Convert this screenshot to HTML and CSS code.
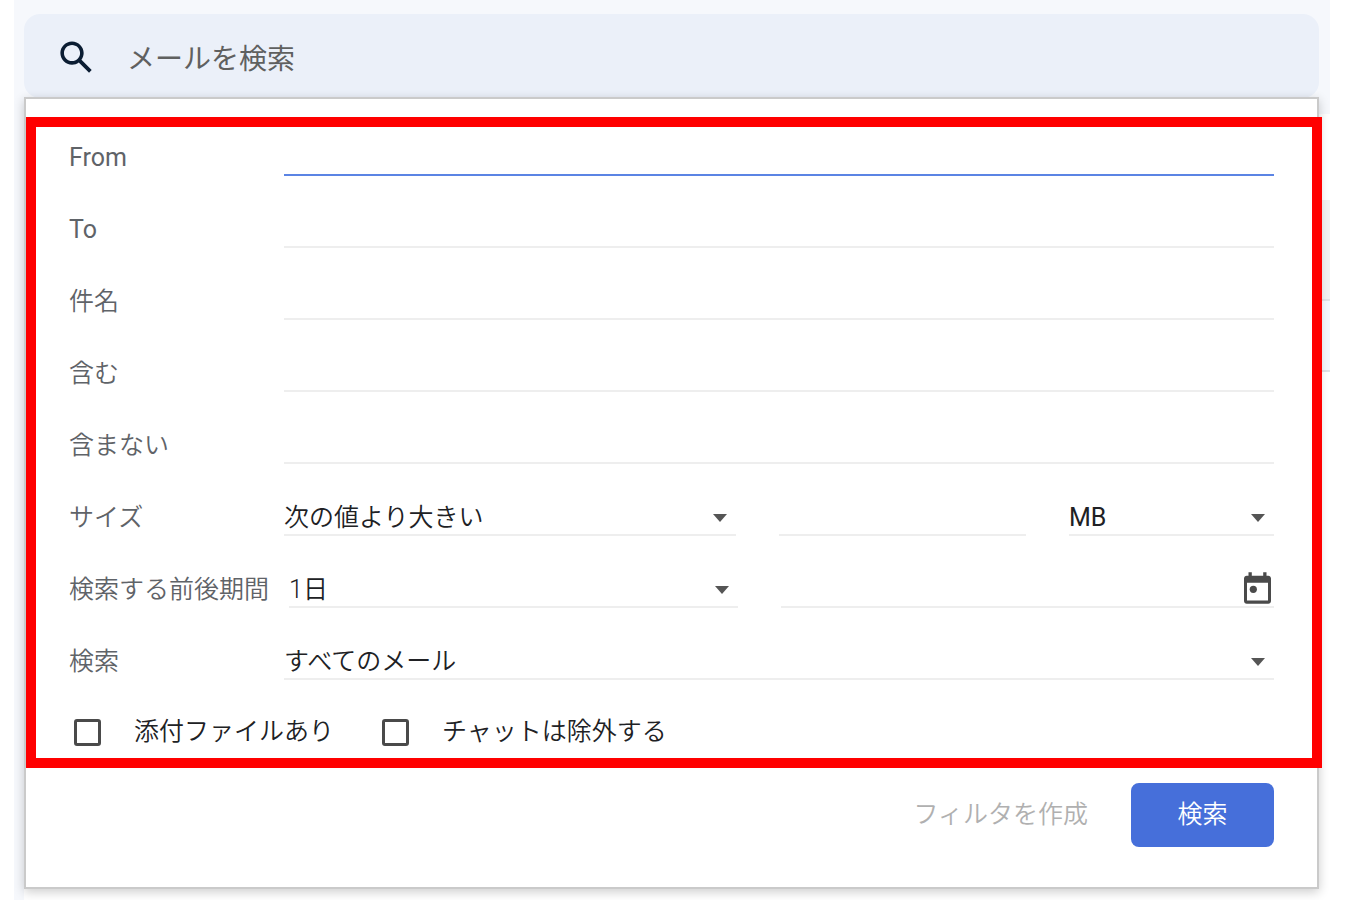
FILE: index.html
```
<!DOCTYPE html>
<html lang="ja">

<head>
    <meta charset="utf-8">
    <title>メールを検索</title>
    <link rel="stylesheet" href="styles.css">
</head>

<body>
    <div class="app">
        <header class="header">
            <form class="search-bar">
                <button type="button" class="icon-button" aria-label="検索">
                    <svg class="search-icon" viewBox="0 0 24 24">
                        <path d="M20.49 19l-5.73-5.73C15.53 12.2 16 10.91 16 9.5 16 5.91 13.09 3 9.5 3S3 5.91 3 9.5 5.91 16 9.5 16c1.41 0 2.7-.47 3.77-1.24L19 20.49 20.49 19zM5 9.5C5 7.01 7.01 5 9.5 5S14 7.01 14 9.5 11.99 14 9.5 14 5 11.99 5 9.5z" />
                    </svg>
                </button>
                <input class="search-input" type="text" placeholder="メールを検索" aria-label="メールを検索">
            </form>

            <!-- Search options drop-down -->
            <form class="panel">
                <div class="highlight"></div>
                <div class="row">
                    <label class="label latin" for="from">From</label>
                    <input class="field active" id="from" type="text">
                </div>
                <div class="row">
                    <label class="label latin" for="to">To</label>
                    <input class="field" id="to" type="text">
                </div>
                <div class="row">
                    <label class="label" for="subject">件名</label>
                    <input class="field" id="subject" type="text">
                </div>
                <div class="row">
                    <label class="label" for="has">含む</label>
                    <input class="field" id="has" type="text">
                </div>
                <div class="row">
                    <label class="label" for="hasnot">含まない</label>
                    <input class="field" id="hasnot" type="text">
                </div>
                <div class="row">
                    <label class="label" for="size">サイズ</label>
                    <div class="controls size-controls">
                        <div class="select">
                            <select class="field" id="size">
                                <option>次の値より大きい</option>
                            </select>
                        </div>
                        <input class="field" type="text" aria-label="サイズの値">
                        <div class="select">
                            <select class="field latin" aria-label="単位">
                                <option>MB</option>
                            </select>
                        </div>
                    </div>
                </div>
                <div class="row">
                    <label class="label" for="within">検索する前後期間</label>
                    <div class="controls date-controls">
                        <div class="select">
                            <select class="field" id="within">
                                <option>1日</option>
                            </select>
                        </div>
                        <div class="date">
                            <input class="field" type="text" aria-label="日付">
                            <button type="button" class="icon-button calendar" aria-label="カレンダー">
                                <svg class="calendar-icon" viewBox="3 1 18 21">
                                    <path fill-rule="evenodd" d="M6 1h2.2v2.3h7.6V1H18v2.3h1.2c1 0 1.8.8 1.8 1.8v15.1c0 1-.8 1.8-1.8 1.8H4.8c-1 0-1.8-.8-1.8-1.8V5.100c0-1 .8-1.8 1.800-1.800H6zM5 8v11.900h14V8z" />
                                    <circle cx="9.2" cy="12.4" r="2.4" />
                                </svg>
                            </button>
                        </div>
                    </div>
                </div>
                <div class="row">
                    <label class="label" for="scope">検索</label>
                    <div class="select">
                        <select class="field" id="scope">
                            <option>すべてのメール</option>
                        </select>
                    </div>
                </div>
                <div class="row checks">
                    <label class="check"><input type="checkbox">添付ファイルあり</label>
                    <label class="check"><input type="checkbox">チャットは除外する</label>
                </div>
                <div class="actions">
                    <button type="button" class="filter-button">フィルタを作成</button>
                    <button type="button" class="submit-button">検索</button>
                </div>
            </form>
        </header>

        <!-- Mail list behind the drop-down -->
        <main class="mail">
            <div class="toolbar"></div>
            <div class="mail-row tabs"></div>
            <div class="mail-row"></div>
        </main>
    </div>
</body>

</html>
```

FILE: styles.css
```
* {
    box-sizing: border-box;
}

body {
    font-family: Roboto, "Noto Sans CJK JP", sans-serif;
    font-size: 25px;
    font-weight: 350;
    line-height: 36px;
    color: #202124;
    background-color: #fff;
    margin: 0;
}

input,
select,
button {
    font: inherit;
    color: inherit;
    background: none;
    border: none;
    border-radius: 0;
    margin: 0;
    padding: 0;
}

button {
    cursor: pointer;
}

.app {
    display: flex;
    flex-direction: column;
    min-height: 100vh;
    margin: 0 15px 0 14px;
    background-color: #f6f8fc;
}

.header {
    position: relative;
    padding: 14px 11px 16px 10px;
}

.search-bar {
    display: flex;
    align-items: center;
    gap: 29px;
    height: 84px;
    padding: 3px 31px 0;
    border-radius: 16px;
    background-color: #ebf0f9;
}

.icon-button {
    display: flex;
}

.search-icon {
    width: 43px;
    height: 43px;
    fill: #0b1d33;
}

.search-input {
    flex: 1;
    padding-top: 4px;
    font-size: 28px;
    font-weight: 400;
    outline: none;
}

.search-input::placeholder {
    color: #5f6060;
    opacity: 1;
}

.panel {
    position: absolute;
    top: 97px;
    left: 10px;
    right: 11px;
    padding: 5px 43px 40px;
    background-color: #fff;
    border: 2px solid #cacaca;
    box-shadow: 0 3px 10px rgba(0, 0, 0, 0.2);
}

/* Red frame around the search conditions */
.highlight {
    position: absolute;
    top: 18px;
    left: 0;
    right: -5px;
    bottom: 119px;
    border: 10px solid #f00;
    pointer-events: none;
}

.row {
    display: flex;
    align-items: flex-end;
    height: 72px;
}

.label {
    flex: none;
    min-width: 215px;
    padding-right: 20px;
    color: #5f6368;
}

.latin {
    font-weight: 400;
}

.field {
    display: block;
    flex: 1;
    width: 100%;
    min-width: 0;
    height: 40px;
    border-bottom: 2px solid #eee;
    outline: none;
    appearance: none;
}

select.field {
    padding-top: 4px;
}

.field.active {
    border-bottom-color: #5b84e4;
}

.controls {
    display: grid;
    flex: 1;
    gap: 43px;
}

.size-controls {
    grid-template-columns: 452fr 247fr 205fr;
}

.date-controls {
    grid-template-columns: 449fr 493fr;
}

.select {
    position: relative;
    flex: 1;
}

.select::after {
    content: "";
    position: absolute;
    right: 9px;
    top: 18px;
    border: 7px solid transparent;
    border-top: 8px solid #555;
    border-bottom: none;
    pointer-events: none;
}

.date {
    position: relative;
}

.calendar {
    position: absolute;
    right: 3px;
    bottom: 4px;
}

.calendar-icon {
    width: 27px;
    height: 32px;
    fill: #4a4a4a;
}

.checks {
    gap: 48px;
    padding: 0 0 2px 5px;
}

.check {
    display: flex;
    align-items: center;
    gap: 33px;
}

.check input {
    width: 27px;
    height: 27px;
    border: 3px solid #4a4a4a;
    border-radius: 3px;
    appearance: none;
}

.actions {
    display: flex;
    justify-content: flex-end;
    gap: 43px;
    margin-top: 31px;
}

.filter-button {
    color: #b0b0b0;
}

.submit-button {
    width: 143px;
    height: 64px;
    border-radius: 8px;
    color: #fff;
    background-color: #466fda;
}

.mail {
    flex: 1;
    margin-left: 10px;
    background-color: #fff;
}

.toolbar {
    height: 86px;
}

.mail-row {
    height: 71px;
    border-bottom: 2px solid #e0e2e6;
    background-color: #f4f7fd;
}

.mail-row.tabs {
    height: 101px;
    background-color: #f2f2f2;
}
```
